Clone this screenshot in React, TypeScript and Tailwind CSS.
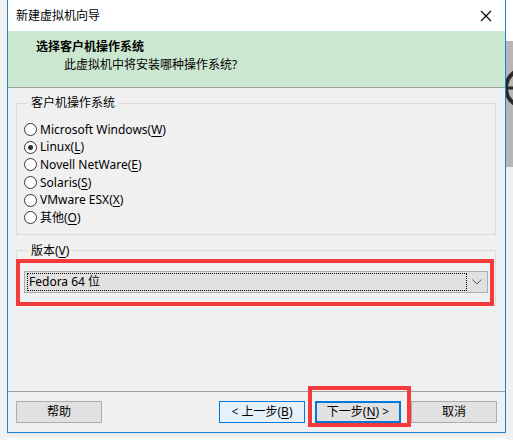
import React from "react";

const FONT = "font-['Segoe_UI','Noto_Sans','Noto_Sans_CJK_SC',sans-serif]";

function Mn({ children }: { children: React.ReactNode }) {
  return <span className="underline underline-offset-2">{children}</span>;
}

function Radio({ checked, label }: { checked?: boolean; label: React.ReactNode }) {
  return (
    <label className="flex items-center h-[17.6px] gap-[3px]">
      <span className="w-[13px] h-[13px] rounded-full border border-[#333] bg-white flex items-center justify-center shrink-0">
        {checked && <span className="w-[5px] h-[5px] rounded-full bg-[#333]" />}
      </span>
      <span className="text-[12px] text-black leading-none">{label}</span>
    </label>
  );
}

function Btn({ children, variant }: { children: React.ReactNode; variant?: "hover" | "default" }) {
  const cls =
    variant === "hover"
      ? "border border-[#0078d7] bg-[#e5f1fb]"
      : variant === "default"
      ? "border-2 border-[#0078d7] bg-[#e1e1e1]"
      : "border border-[#adadad] bg-[#e1e1e1]";
  return (
    <button
      type="button"
      className={`w-[86px] h-[22px] flex items-center justify-center text-[12px] text-black ${cls}`}
    >
      {children}
    </button>
  );
}

export default function App() {
  return (
    <div className={`w-[513px] h-[440px] bg-white flex overflow-hidden ${FONT}`}>
      {/* Left backdrop */}
      <div className="w-[7px] h-full bg-[#f2f2f2]" />

      {/* Dialog window + shadow */}
      <div className="w-[499px] flex flex-col">
        <div className="h-[433px] flex flex-col border-l border-r border-b border-[#1883d7] bg-[#f0f0f0]">
          {/* Title bar */}
          <div className="h-[31px] bg-white flex items-center justify-between pl-[8px] pr-[9px]">
            <span className="text-[12px] text-black">新建虚拟机向导</span>
            <svg width="12" height="12" viewBox="0 0 12 12" className="mr-[4px]">
              <path d="M1 1 L11 11 M11 1 L1 11" stroke="#000" strokeWidth="1.1" />
            </svg>
          </div>

          {/* Header */}
          <div className="h-[57px] bg-[#cce7cf] border-b border-[#a0a0a0] flex flex-col pt-[7px]">
            <div className="pl-[28px] h-[18px] flex items-center text-[12px] font-bold text-black">
              选择客户机操作系统
            </div>
            <div className="pl-[56px] h-[18px] flex items-center text-[12px] text-black">
              此虚拟机中将安装哪种操作系统?
            </div>
          </div>

          {/* Body */}
          <div className="flex-1 flex flex-col px-[8px]">
            <fieldset className="mt-[7px] w-[480px] border border-[#dcdcdc] pl-[7px] pb-[7px] pt-[10px]">
              <legend className="ml-[4px] px-[3px] text-[12px] leading-[16px] text-black">客户机操作系统</legend>
              <Radio label={<>Microsoft Windows(<Mn>W</Mn>)</>} />
              <Radio checked label={<>Linux(<Mn>L</Mn>)</>} />
              <Radio label={<>Novell NetWare(<Mn>E</Mn>)</>} />
              <Radio label={<>Solaris(<Mn>S</Mn>)</>} />
              <Radio label={<>VMware ESX(<Mn>X</Mn>)</>} />
              <Radio label={<>其他(<Mn>O</Mn>)</>} />
            </fieldset>

            <div className="relative mt-[8px]">
              <fieldset className="w-[480px] h-[63px] border border-[#dcdcdc] pl-[7px] pt-[12px]">
                <legend className="ml-[4px] px-[3px] text-[12px] leading-[16px] text-black">
                  版本(<Mn>V</Mn>)
                </legend>
                <div className="w-[464px] h-[22px] bg-[#e1e1e1] border border-[#adadad] flex items-center pl-[2px] pr-[5px]">
                  <div className="w-[443px] h-[18px] border border-dotted border-black flex items-center pl-[1px] text-[12px] text-black">
                    Fedora 64 位
                  </div>
                  <svg width="10" height="6" viewBox="0 0 10 6" className="ml-[5px]">
                    <path d="M0.5 0.5 L5 5 L9.5 0.5" stroke="#555" strokeWidth="1" fill="none" />
                  </svg>
                </div>
              </fieldset>
              {/* Annotation */}
              <div className="absolute left-0 top-[16px] w-[478px] h-[47px] border-4 border-[#f43a3a] pointer-events-none" />
            </div>

            <div className="flex-1" />
          </div>

          {/* Footer */}
          <div className="h-[41px] border-t border-[#a0a0a0] flex items-start pt-[9px] px-[8px] relative">
            <Btn>帮助</Btn>
            <div className="flex-1" />
            <div className="flex gap-[10px]">
              <Btn variant="hover">&lt; 上一步(<Mn>B</Mn>)</Btn>
              <Btn variant="default">下一步(<Mn>N</Mn>) &gt;</Btn>
              <Btn>取消</Btn>
            </div>
            <div className="absolute left-[300px] top-[-6px] w-[103px] h-[41px] border-4 border-[#f43a3a] pointer-events-none" />
          </div>
        </div>
        <div className="flex-1 bg-gradient-to-b from-[#e6e6e6] to-white" />
      </div>

      {/* Right backdrop: window behind */}
      <div className="flex-1 flex flex-col">
        <div className="h-[41px] bg-white" />
        <div className="h-[126px] bg-[#b6b6b6] relative overflow-hidden">
          <svg width="7" height="126" viewBox="0 0 7 126" className="block">
            <circle cx="19" cy="47" r="19" stroke="#2a2a2a" strokeWidth="4" fill="none" />
            <path d="M0 47 H7" stroke="#2a2a2a" strokeWidth="3" />
          </svg>
        </div>
        <div className="flex-1 bg-[#f0f0f0]" />
      </div>
    </div>
  );
}
